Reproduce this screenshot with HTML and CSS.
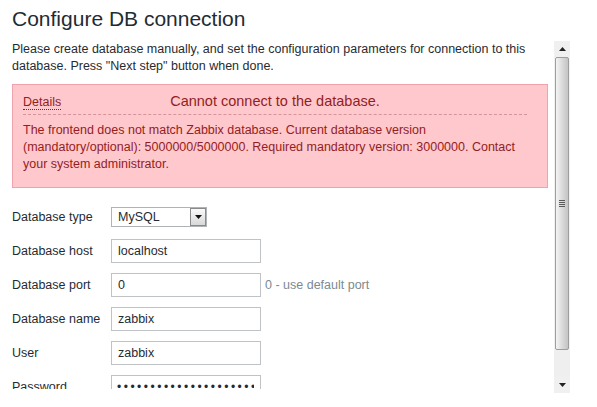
FILE: index.html
```html
<!DOCTYPE html>
<html>
<head>
<meta charset="utf-8">
<link rel="stylesheet" href="styles.css">
</head>
<body>
<h1 class="title">Configure DB connection</h1>
<div class="frame">
  <div class="content">
    <p class="intro">Please create database manually, and set the configuration parameters for connection to this database. Press "Next step" button when done.</p>
    <div class="msg-bad">
      <div class="msg-head">
        <span class="details">Details</span>
        <span class="msg-title">Cannot connect to the database.</span>
        <span></span>
      </div>
      <div class="msg-body">The frontend does not match Zabbix database. Current database version (mandatory/optional): 5000000/5000000. Required mandatory version: 3000000. Contact your system administrator.</div>
    </div>
    <div class="form">
      <label class="lbl">Database type</label>
      <div class="field">
        <div class="select"><span class="select-val">MySQL</span><span class="select-btn"><svg width="7" height="4" viewBox="0 0 7 4"><path d="M0 0H7L3.5 4Z" fill="#111"/></svg></span></div>
      </div>
      <label class="lbl">Database host</label>
      <div class="field"><input class="inp" type="text" value="localhost"></div>
      <label class="lbl">Database port</label>
      <div class="field"><input class="inp" type="text" value="0"><span class="hint">0 - use default port</span></div>
      <label class="lbl">Database name</label>
      <div class="field"><input class="inp" type="text" value="zabbix"></div>
      <label class="lbl">User</label>
      <div class="field"><input class="inp" type="text" value="zabbix"></div>
      <label class="lbl">Password</label>
      <div class="field"><input class="inp pw" type="password" value="zabbixzabbixzabbixzab"></div>
    </div>
  </div>
  <div class="scrollbar">
    <div class="sb-btn"><svg width="7" height="4" viewBox="0 0 7 4"><path d="M3.5 0L7 4H0Z" fill="#222"/></svg></div>
    <div class="sb-thumb"><span class="grip"></span></div>
    <div class="sb-rest"></div>
    <div class="sb-btn"><svg width="7" height="4" viewBox="0 0 7 4"><path d="M0 0H7L3.5 4Z" fill="#222"/></svg></div>
  </div>
</div>
</body>
</html>
```

FILE: styles.css
```css
* { box-sizing: border-box; }
html, body { margin: 0; padding: 0; background: #fff; }
body {
  width: 597px;
  height: 407px;
  overflow: hidden;
  font-family: "Liberation Sans", Arial, sans-serif;
  font-size: 12.5px;
  color: #1f2c33;
}
.title {
  margin: 7px 0 10px 12px;
  font-size: 21px;
  line-height: 24px;
  font-weight: normal;
  color: #1f2c33;
}
.frame {
  display: flex;
  width: 570px;
  height: 352px;
}
.content {
  flex: 1;
  overflow: hidden;
  height: 348px;
  max-width: 554px;
  padding: 0 6px 0 12px;
}
.intro {
  margin: 0 0 9px 0;
  line-height: 17px;
}
.msg-bad {
  background: #ffc8cd;
  border: 1px solid #f0a3ab;
  color: #931d22;
  padding: 7px 20px 14px 10px;
}
.msg-head {
  display: grid;
  grid-template-columns: 1fr auto 1fr;
  align-items: baseline;
  padding-bottom: 4px;
  border-bottom: 1px dashed #d4949a;
}
.details {
  font-size: 12.5px;
  line-height: 14px;
  border-bottom: 1px dotted #931d22;
  justify-self: start;
}
.msg-title {
  font-size: 14.5px;
  line-height: 18px;
}
.msg-body {
  margin-top: 7px;
  line-height: 17px;
  padding-right: 6px;
}
.form {
  margin-top: 17px;
  display: grid;
  grid-template-columns: 99px auto;
  row-gap: 10px;
  align-items: center;
}
.lbl {
  line-height: 24px;
}
.field {
  display: flex;
  align-items: center;
  height: 24px;
}
.inp {
  width: 150px;
  height: 24px;
  border: 1px solid #bfc3c6;
  padding: 0 6px;
  font-family: "Liberation Sans", Arial, sans-serif;
  font-size: 12.5px;
  color: #1f2c33;
  background: #fff;
  margin: 0;
  outline: none;
}
.pw { letter-spacing: 2.5px; font-size: 12px; padding-left: 5px; }
.hint {
  margin-left: 4px;
  color: #7b8a92;
}
.select {
  display: flex;
  align-items: center;
  width: 96px;
  height: 20px;
  border: 1px solid #aeb3b6;
  background: #fff;
  padding: 0 0 0 6px;
}
.select-val { flex: 1; }
.select-btn {
  width: 16px;
  height: 18px;
  border: 1px solid #8a8a8a;
  background: linear-gradient(#fafafa, #d8d8d8);
  display: flex;
  align-items: center;
  justify-content: center;
}
.scrollbar {
  width: 16px;
  display: flex;
  flex-direction: column;
  background: #f2f2f2;
  height: 352px;
}
.sb-btn {
  height: 16px;
  display: flex;
  align-items: center;
  justify-content: center;
  background: #f0f0f0;
}
.sb-thumb {
  height: 293px;
  margin: 0 1px;
  border: 1px solid #9d9d9d;
  border-radius: 2px;
  background: linear-gradient(90deg, #f4f4f4, #d6d6d6 60%, #c4c4c4);
  display: flex;
  align-items: center;
  justify-content: center;
}
.grip {
  width: 6px;
  height: 7px;
  background: repeating-linear-gradient(#5a5a5a 0 1px, transparent 1px 2px);
}
.sb-rest { flex: 1; background: #efefef; }
```
